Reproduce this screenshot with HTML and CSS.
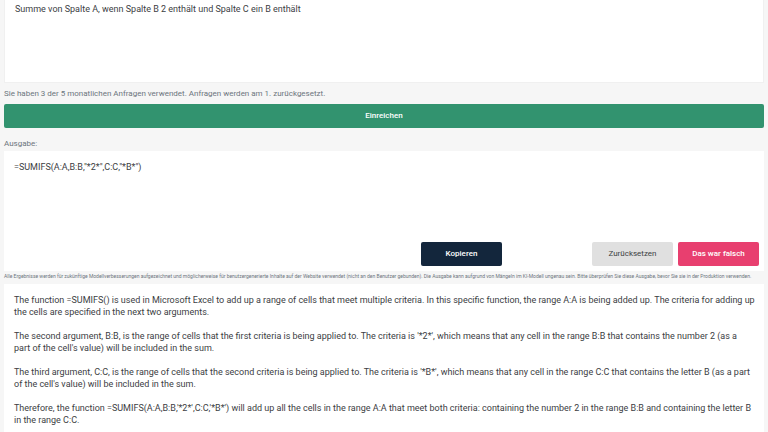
FILE: index.html
```html
<!DOCTYPE html>
<html lang="de">
<head>
    <meta charset="UTF-8">
    <meta name="viewport" content="width=device-width, initial-scale=1.0">
    <title>Excel-Formel-Generator</title>
    <link rel="stylesheet" href="styles.css">
</head>
<body>
    <form class="prompt-form" onsubmit="return false">
        <textarea class="prompt-input" aria-label="Eingabe">Summe von Spalte A, wenn Spalte B 2 enthält und Spalte C ein B enthält</textarea>
        <p class="quota">Sie haben 3 der 5 monatlichen Anfragen verwendet. Anfragen werden am 1. zurückgesetzt.</p>
        <button class="submit-button" type="submit">Einreichen</button>
    </form>

    <label class="output-label" for="output">Ausgabe:</label>
    <div class="output-card">
        <textarea class="output-text" id="output" readonly>=SUMIFS(A:A,B:B,"*2*",C:C,"*B*")</textarea>
        <div class="button-row">
            <button class="copy-button" type="button">Kopieren</button>
            <button class="reset-button" type="button">Zurücksetzen</button>
            <button class="wrong-button" type="button">Das war falsch</button>
        </div>
    </div>
    <p class="disclaimer">Alle Ergebnisse werden für zukünftige Modellverbesserungen aufgezeichnet und möglicherweise für benutzergenerierte Inhalte auf der Website verwendet (nicht an den Benutzer gebunden). Die Ausgabe kann aufgrund von Mängeln im KI-Modell ungenau sein. Bitte überprüfen Sie diese Ausgabe, bevor Sie sie in der Produktion verwenden.</p>

    <div class="explanation" lang="en">
        <p>The function =SUMIFS() is used in Microsoft Excel to add up a range of cells that meet multiple criteria. In this specific function, the range A:A is being added up. The criteria for adding up<br>the cells are specified in the next two arguments.</p>
        <p>The second argument, B:B, is the range of cells that the first criteria is being applied to. The criteria is '*2*', which means that any cell in the range B:B that contains the number 2 (as a<br>part of the cell's value) will be included in the sum.</p>
        <p>The third argument, C:C, is the range of cells that the second criteria is being applied to. The criteria is '*B*', which means that any cell in the range C:C that contains the letter B (as a part<br>of the cell's value) will be included in the sum.</p>
        <p>Therefore, the function =SUMIFS(A:A,B:B,'*2*',C:C,'*B*') will add up all the cells in the range A:A that meet both criteria: containing the number 2 in the range B:B and containing the letter B<br>in the range C:C.</p>
    </div>
</body>
</html>
```

FILE: styles.css
```css
* {
    box-sizing: border-box;
}
body {
    margin: 0;
    padding: 0 4px;
    background-color: #f6f6f6;
    color: #3c4043;
    font-family: Roboto, sans-serif;
    font-size: 9px;
    line-height: 12px;
}
p {
    margin: 0;
}
textarea,
button {
    font: inherit;
    color: inherit;
}
textarea {
    display: block;
    width: 100%;
    border: none;
    outline: none;
    resize: none;
    background-color: white;
}
.prompt-input {
    height: 83px;
    padding: 3px 10px;
    border: 1px solid #f0f0f0;
    border-top: none;
}
.quota,
.output-label {
    color: #6c757d;
    font-size: 8px;
}
.quota {
    padding: 5px 0 4px;
}
button {
    height: 24px;
    padding: 0;
    border: none;
    border-radius: 2px;
    font-size: 8px;
    font-weight: 500;
    cursor: pointer;
}
.submit-button {
    display: block;
    width: 100%;
    background-color: #32936f;
    color: white;
}
.output-label {
    display: block;
    padding: 10px 0 1px;
}
.output-card {
    padding-bottom: 5px;
    background-color: white;
}
.output-text {
    height: 91px;
    padding: 10px;
}
.button-row {
    display: flex;
    justify-content: flex-end;
    gap: 5px;
    padding-right: 5px;
}
.button-row button {
    width: 81px;
}
.copy-button {
    margin-right: 85px;
    background-color: #13263c;
    color: white;
}
.button-row .reset-button {
    background-color: #e0e0e0;
    font-weight: 400;
}
.wrong-button {
    background-color: #e83f6f;
    color: white;
}
.disclaimer {
    padding-bottom: 3px;
    color: #6c757d;
    font-size: 5px;
    line-height: 10px;
}
.explanation {
    display: grid;
    gap: 12px;
    padding: 10px 0 10px 10px;
    background-color: white;
}
```
